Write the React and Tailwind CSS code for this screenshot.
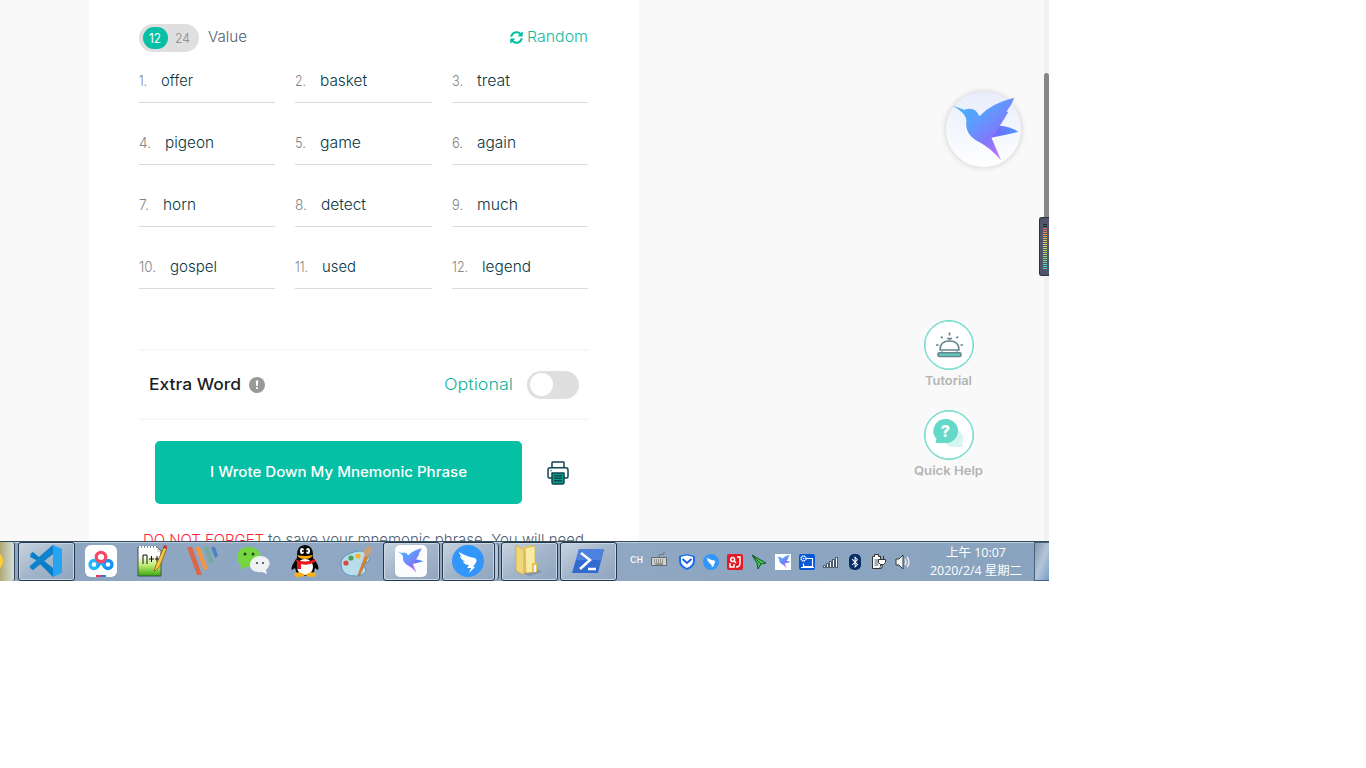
import React from "react";
import { FaSyncAlt, FaBluetoothB } from "react-icons/fa";

const words = ["offer", "basket", "treat", "pigeon", "game", "again", "horn", "detect", "much", "gospel", "used", "legend"];
const numSlots = ["w-[8px]", "w-[11px]", "w-[11px]", "w-[12px]", "w-[11px]", "w-[11px]", "w-[10px]", "w-[12px]", "w-[11px]", "w-[17px]", "w-[13px]", "w-[16px]"];
const numWidths = [8, 11, 11, 12, 11, 11, 10, 12, 11, 17, 13, 16];
const wordWidths = [32, 47, 33, 49, 41, 39, 33, 45, 41, 47, 34, 49];

/* One line of real text set to an exact advance width. */
function Fit({ children, w, size = 15, weight = 300, fill = "#143a42", className = "", font = "Inter, sans-serif" }) {
  return (
    <svg className={"block shrink-0 overflow-visible " + className} width={w} height="20" viewBox={`0 0 ${w} 20`}>
      <text x="0" y="15" textLength={w} lengthAdjust="spacingAndGlyphs" fontFamily={font} fontSize={size} fontWeight={weight} fill={fill}>{children}</text>
    </svg>
  );
}

function Bird({ id, className }) {
  return (
    <svg viewBox="155 77 207 197" className={className}>
      <defs>
        <linearGradient id={id} x1="180" y1="100" x2="315" y2="265" gradientUnits="userSpaceOnUse">
          <stop offset="0" stopColor="#48b2f8" />
          <stop offset=".32" stopColor="#5b9dff" />
          <stop offset=".65" stopColor="#8278fb" />
          <stop offset="1" stopColor="#d070fa" />
        </linearGradient>
        <linearGradient id={id + "t"} x1="357" y1="0" x2="276" y2="0" gradientUnits="userSpaceOnUse">
          <stop offset="0" stopColor="#4d9bff" />
          <stop offset="1" stopColor="#7962fa" />
        </linearGradient>
      </defs>
      <path d="M298 165Q333 168 357 184Q315 194 274 202Z" fill={`url(#${id}t)`} />
      <path d="M160 106L195 118Q227 106 240 137Q278 98 345 82Q337 104 321 124L327 124Q315 148 300 167Q291 188 276 201L305 269Q276 235 246 218Q196 196 201 153Q203 130 160 106Z" fill={`url(#${id})`} />
    </svg>
  );
}

function Swift({ className }) {
  return (
    <svg viewBox="0 0 32 32" className={className}>
      <circle cx="16" cy="16" r="16" fill="#3296fa" />
      <path d="M7 7Q15 12 23 13Q26 15 23 19L21 22H23L17 28L19 23H15L17 20Q12 20 11 16L14 17Q8 14 8 11L12 13Q8 11 7 7Z" fill="#fff" />
    </svg>
  );
}

function Task({ children, w, className = "" }) {
  return (
    <div className={"flex h-[39px] shrink-0 items-center justify-center rounded-[3px] border border-[#25374d] bg-linear-to-br from-[#c8d3df] via-[#a3b5ca] to-[#8fa5bf] pr-[2px] pb-[2px] shadow-[inset_0_0_0_1px_#cbd6e3] " + w + " " + className}>
      {children}
    </div>
  );
}

function Slot({ children }) {
  return <div className="flex h-[39px] w-[51px] shrink-0 items-center justify-center pr-[2px] pb-[2px]">{children}</div>;
}

function Content() {
  return (
    <main className="flex h-[541px] w-[550px] shrink-0 flex-col overflow-hidden bg-white px-[50px] pt-6">
      <div className="flex h-7 shrink-0 items-center">
        <div className="flex h-7 w-[60px] items-center rounded-full bg-[#dfdfdf] pl-1">
          <div className="flex h-[22px] w-[25px] items-center justify-center rounded-full bg-[#05c0a5]"><Fit w={12} size={13} weight={400} fill="#fff" className="mr-px">12</Fit></div>
          <Fit w={15} size={13} weight={300} fill="#888" className="ml-[7px]">24</Fit>
        </div>
        <Fit w={39} fill="#506175" className="mb-[2px] ml-[9px]">Value</Fit>
        <div className="mr-px mb-[2px] ml-auto flex items-center text-[#05c0a5]">
          <FaSyncAlt className="mr-1 size-[13px]" />
          <Fit w={61} fill="#16b79e">Random</Fit>
        </div>
      </div>
      <div className="mt-[9px] grid shrink-0 grid-cols-[136px_137px_136px] gap-5">
        {words.map((word, i) => (
          <div key={word} className="flex h-[42px] items-center border-b border-[#dbdbdb] pb-[1px]">
            <div className={"shrink-0 " + numSlots[i]}><Fit w={numWidths[i]} fill="#858585">{i + 1}.</Fit></div>
            <Fit w={wordWidths[i]} fill="#073642" className="ml-[14px]">{word}</Fit>
          </div>
        ))}
      </div>
      <section className="mt-[60px] flex h-[71px] shrink-0 items-center border-y-2 border-[#f8f8f8] px-[10px]">
        <Fit w={92} size={16} weight={500} fill="#1b1e22">Extra Word</Fit>
        <div className="ml-2 flex size-4 items-center justify-center rounded-full bg-[#999]">
          <svg viewBox="0 0 16 16" className="size-4"><path d="M6.800 3.500h2.500L8.800 9H7.200Z M7 10.200h2V12H7Z" fill="#fff" /></svg>
        </div>
        <Fit w={69} size={16} fill="#12b69c" className="ml-auto">Optional</Fit>
        <div className="ml-[14px] flex h-7 w-[52px] items-center rounded-full bg-[#dfdfdf] pl-[3px]">
          <div className="size-[23px] rounded-full bg-white" />
        </div>
      </section>
      <div className="mt-[21px] flex shrink-0 items-center pl-4">
        <button className="flex h-[63px] w-[367px] items-center justify-center rounded-[5px] bg-[#05c0a5] pb-px">
          <Fit w={257} size={14} weight={500} fill="#fff">I Wrote Down My Mnemonic Phrase</Fit>
        </button>
        <svg viewBox="0 0 22 24" className="ml-[25px] h-6 w-[22px]" fill="none" stroke="#0c4650" strokeWidth="1.500" strokeLinejoin="round">
          <path d="M5 7V1.700q0-.7.7-.7h10.600q.7 0 .7.700V7M5 17H2.500Q1 17 1 15.500V9q0-2.200 2.200-2.200h15.600Q21 6.800 21 9v6.500Q21 17 19.500 17H17" />
          <path d="M5 12h12v9.500q0 1.500-1.500 1.500h-9Q5 23 5 21.500Z" fill="#079e8e" />
          <path d="M7 14.800h8M7 17.300h8M7 19.800h8M3.500 9.500h1" />
        </svg>
      </div>
      <p className="mt-[26px] flex shrink-0 pl-1">
        <Fit w={121} size={15} weight={300} fill="#ff1f3d">DO NOT FORGET</Fit>
        <Fit w={316} size={15} fill="#506175" className="ml-1">to save your mnemonic phrase. You will need</Fit>
      </p>
    </main>
  );
}

function HelpRail() {
  return (
    <aside className="flex w-[70px] flex-col items-center">
      <div className="flex size-[50px] items-center justify-center rounded-full border border-[#64d9c8] bg-white shadow-[inset_0_0_0_.5px_#64d9c8]">
        <svg viewBox="0 0 28 26" className="mr-px mb-px h-[26px] w-7" fill="none" stroke="#668791" strokeWidth="1.600">
          <path d="M5 18q0-9 9.500-9T24 18Z" fill="#fff" />
          <path d="M12 6.500h5M14.500 6v2.500" />
          <path d="M7 18.500v2h15v-2" strokeWidth="1" />
          <rect x="3" y="20.700" width="23" height="3.800" rx="1.200" fill="#5fcbbb" />
          <path d="M14.500.5v3M6 4.500l1.600 1.800M23 4.500l-1.600 1.800M1 13h2.500M25.500 13H28" strokeWidth="1.700" />
        </svg>
      </div>
      <Fit w={47} size={12} weight={600} fill="#b4b4b4" className="mr-px">Tutorial</Fit>
      <div className="mt-[20px] flex size-[50px] items-center justify-center rounded-full border border-[#64d9c8] bg-white shadow-[inset_0_0_0_.5px_#64d9c8]">
        <svg viewBox="0 0 50 50" className="size-[50px] shrink-0">
          <path d="M31 20a8.500 8.500 0 0 1 7 13l1 4H30q-8 0-10-7Z" fill="#d7f5f0" />
          <path d="M22 9a12 12 0 1 1 0 24H11.500l1-4A12 12 0 0 1 22 9Z" fill="#65d9c8" />
          <text x="21.500" y="27" textAnchor="middle" fontSize="16" fontWeight="800" fontFamily="Inter, sans-serif" fill="#fff">?</text>
        </svg>
      </div>
      <Fit w={69} size={12} weight={600} fill="#b4b4b4" className="mr-px">Quick Help</Fit>
    </aside>
  );
}

const meterColors = ["#252a33", "#252a33", "#ee6262", "#f07355", "#f0844c", "#ed944a", "#eaa54b", "#e7b34d", "#e4c34f", "#ddd053", "#d7d957", "#cdd957", "#c6db5b", "#badb61", "#afdc68", "#9fdc6d", "#91df76", "#81df83", "#73dd91", "#65dda0", "#57d9b2", "#4bd6bf", "#43d1ca"];

function Taskbar() {
  return (
    <footer className="flex h-10 w-[1049px] shrink-0 items-center overflow-hidden border-t border-[#334d5d] bg-linear-to-r from-[#8da5c1] via-[#91a9c3] to-[#89a2be] shadow-[inset_0_1px_0_#bdcbd9]">
      <div className="h-[39px] w-[15px] shrink-0 overflow-hidden rounded-r-[3px] border-r border-[#33465b] bg-linear-to-r from-[#b2a873] to-[#d4dfdc]"><div className="mt-[9px] -ml-[17px] size-5 rounded-full bg-[#ffcf32]" /></div>
      <Task w="w-[57px]" className="ml-[3px]">
        <svg viewBox="0 0 32 32" className="size-8"><path d="M23 0L9 12 3 7 0 9l20 20 3 3V23L4 8l-4 3v1l8 4-8 5v2l3 2 20-16Z" fill="#087dc8" /><path d="M0 21l3 4 20-17V0Z" fill="#0f83cf" /><path d="M23 0l9 4v24l-9 4Z" fill="#26a4f2" /></svg>
      </Task>
      <div className="flex shrink-0 pl-px">
        <Slot>
          <svg viewBox="0 0 32 32" className="size-8"><rect width="32" height="32" rx="6" fill="#fff" /><g fill="none" strokeWidth="3.300"><circle cx="9" cy="19.500" r="4" stroke="#22b7fb" /><circle cx="23" cy="19.500" r="4" stroke="#1792f5" /><path d="M12 22l4-5 4 5" stroke="#22a6fa" /><circle cx="16" cy="12" r="4.700" stroke="#fb4866" /></g><path d="M11 30h5v2h-5Z" fill="#ef345b" /><path d="M16 30h5v2h-5Z" fill="#207be4" /></svg>
        </Slot>
        <Slot>
          <svg viewBox="0 0 30 34" className="h-[34px] w-[30px]"><defs><linearGradient id="note" x2="0" y2="1"><stop offset=".3" stopColor="#fff" /><stop offset=".65" stopColor="#bce86a" /><stop offset="1" stopColor="#34a80e" /></linearGradient></defs><path d="M1 3h19l4 4v25H1Z" fill="url(#note)" stroke="#425151" /><path d="M2 3h18" stroke="#fff" strokeWidth="2" strokeDasharray="2 1" /><path d="M20 3v5h4" fill="#ddd" /><path d="M6 20v-9h4v9M12 15h5M14.500 12v6M18 15h4M20 12v6" fill="none" stroke="#111" /><path d="M17 27l2-6L27 3l3 1-7 18-5 5Z" fill="#f7c53d" stroke="#76521b" strokeWidth=".7" /><path d="M26 4l1-3 3 1v3Z" fill="#b73a43" /></svg>
        </Slot>
        <Slot>
          <svg viewBox="0 0 32 32" className="size-8"><path d="M0 2h5l10 28h-5Z" fill="#dc664a" /><path d="M8 2h5l8 22-4 1Z" fill="#f09746" /><path d="M16 2h5l6 15-4 2Z" fill="#75aaa3" /><path d="M24 2h4l3 9-3 2Z" fill="#4b84bd" /></svg>
        </Slot>
        <Slot>
          <svg viewBox="0 0 34 28" className="h-7 w-[34px]"><path d="M11.500 0C4 0 0 5 0 10q0 5 4 8l-1 4 5-2q14 2 16-10Q22 0 11.500 0Z" fill="#75d640" /><path d="M23 9c-6 0-10 4-10 9s5 8 12 7l5 2-1-4c7-6 3-14-6-14Z" fill="#eef2f3" /><g fill="#284227"><circle cx="8" cy="7" r="1.500" /><circle cx="16" cy="7" r="1.500" /><circle cx="20" cy="16" r="1" /><circle cx="26" cy="16" r="1" /></g></svg>
        </Slot>
        <Slot>
          <svg viewBox="0 0 28 32" className="h-8 w-7"><path d="M6 13Q5 0 14 0t8 13q7 8 5 12l-3-2q-1 8-10 8T4 23l-3 2q-2-3 5-12Z" fill="#070808" /><ellipse cx="14" cy="22" rx="8" ry="8" fill="#fff" /><ellipse cx="11" cy="6" rx="2" ry="3" fill="#fff" /><ellipse cx="17" cy="6" rx="2" ry="3" fill="#fff" /><circle cx="12" cy="6" r="1" /><circle cx="16" cy="6" r="1" /><path d="M6 10q8 2 16 0-2 4-8 4t-8-4Z" fill="#ffa900" /><path d="M4 14q10 5 20 0v3q-7 4-14 2v5H6v-7Z" fill="#e8171c" /><path d="M3 29q5-4 11 1-2 2-9 2ZM14 30q7-5 11-1 1 3-6 3Z" fill="#ffb011" /></svg>
        </Slot>
        <Slot>
          <svg viewBox="0 0 32 32" className="size-8"><path d="M1 20Q0 12 11 8q12-5 17 2 3 4 0 7l-5 1q-3 2 3 6 0 6-9 7Q2 32 1 20Z" fill="#b9ddeb" stroke="#5996b7" /><circle cx="6" cy="18" r="2.600" fill="#d94a42" /><circle cx="11" cy="13" r="2.600" fill="#45a34f" /><circle cx="18" cy="11" r="2.600" fill="#f4b52e" /><path d="M18 30l7-19 3 1-8 18Z" fill="#e3822c" stroke="#a36232" strokeWidth=".5" /><path d="M25 11l-2-6 9-5v6l-4 6Z" fill="#c9a078" /></svg>
        </Slot>
      </div>
      <Task w="w-[57px]" className="ml-[1px]"><div className="flex size-8 items-center justify-center rounded-[5px] bg-[#fcfcff]"><Bird id="taskBird" className="size-[27px]" /></div></Task>
      <Task w="w-[53px]" className="ml-[2px]"><Swift className="size-8" /></Task>
      <div className="h-[37px] w-[4px] shrink-0 rounded-r border-r border-[#32475e] bg-[#b7c5d4]" />
      <Task w="w-[57px]" className="ml-[2px]">
        <svg viewBox="0 0 32 34" className="h-[34px] w-8"><path d="M10 30l14-5 5 3-12 4Z" fill="#60718166" /><path d="M8 4l10-3v26l-9 2Z" fill="#e7cc68" /><path d="M12 4l10-2v26l-9 1Z" fill="#f9eba4" stroke="#d5ae47" strokeWidth=".7" /><path d="M3 1l8 5v25l-8-4Z" fill="#f0d779" stroke="#caa14b" strokeWidth=".7" /><path d="M19 19h5v9h-5Z" fill="#e4c357" /><path d="M22 21v7" stroke="#edfaff" strokeWidth="2" /></svg>
      </Task>
      <Task w="w-[57px]" className="ml-[2px]">
        <svg viewBox="0 0 32 26" className="h-[26px] w-8"><path d="M7 1h25l-6 24H0Z" fill="#326bd0" /><path d="M7 1h25l-3 11H4Z" fill="#4c81df" /><path d="M9 5l9 7-10 9M16 21h8" fill="none" stroke="#fff" strokeWidth="2.500" /></svg>
      </Task>
      <div className="flex h-full w-[300px] shrink-0 items-center pl-[13px]">
        <span className="-mt-[4px] w-[17px] font-['Liberation_Mono',monospace] text-[11px] leading-3 text-white">CH</span>
        <svg viewBox="0 0 16 16" className="ml-[4px] -mt-1 size-4"><path d="M8 5V3l5-1V0" fill="none" stroke="#70757a" /><path d="M.500 5.500h15v8H.5Z" fill="#d2d2cc" stroke="#666b70" /><path d="M3 8h10M3 10h10" stroke="#555" strokeDasharray="1 1" /><path d="M4 12h8" stroke="#555" /></svg>
        <div className="ml-3 flex items-center gap-2 [&>svg]:size-4 [&>svg]:shrink-0">
          <svg viewBox="0 0 16 16"><path d="M8 0l8 2v5q0 6-8 9Q0 13 0 7V2Z" fill="#176eea" /><path d="M2 3q6-3 12 0v4q0 4-6 7-6-3-6-7Z" fill="#fff" /><path d="M3.500 5l4.500 4 4.500-4" fill="none" stroke="#1865d8" strokeWidth="2" /></svg>
          <Swift />
          <svg viewBox="0 0 16 16"><rect width="16" height="16" rx="2" fill="#e31924" /><path d="M7 7a2 2 0 1 1 .1-.1L9 9M10 3h3v6q0 4-4 4M3 9v4h4V10" fill="none" stroke="#fff" strokeWidth="1.500" /></svg>
          <svg viewBox="0 0 16 16"><path d="M1 1l14 8-5 1-3 5-1-6Z" fill="#42c454" stroke="#125a28" /><path d="M2 2l8 8" fill="none" stroke="#125a28" /></svg>
          <div className="flex size-4 items-center justify-center bg-white"><Bird id="trayBird" className="size-[15px]" /></div>
          <svg viewBox="0 0 16 16"><rect width="16" height="16" rx="2" fill="#0757d7" /><path d="M7.500 4.500h6v8h-9v-3M2 13.500h13" fill="none" stroke="#fff" strokeWidth="1.200" /><circle cx="4.500" cy="4.500" r="2.500" fill="#0757d7" stroke="#fff" strokeWidth="1.300" strokeDasharray="1.500 .5" /><circle cx="4.500" cy="4.500" r=".8" fill="#fff" /></svg>
          <svg viewBox="0 0 16 16" fill="#fff" stroke="#28384c" strokeWidth=".8"><path d="M.5 11.500h2v2h-2ZM3.500 9.500h2v4h-2ZM6.500 7.500h2v6h-2ZM9.500 5.500h2v8h-2ZM12.500 3.500h2v10h-2Z" /></svg>
          <div className="flex h-4 w-4 items-center justify-center"><div className="flex h-4 w-[12px] items-center justify-center rounded-[5px] bg-[#072f66] text-white"><FaBluetoothB className="size-[12px]" /></div></div>
          <svg viewBox="0 0 16 16"><path d="M1.500 2.500h2v-2h4v2h2v12h-8Z" fill="#fff" stroke="#333" /><path d="M3.500 5h4v7h-4Z" fill="#9baebd" /><path d="M9.500 2v3M12.500 2v3M7.500 5.500h7v3l-2 2h-3l-2-2ZM11 11v3H8" fill="#fff" stroke="#333" /></svg>
          <svg viewBox="0 0 16 16" fill="none" stroke="#303841"><path d="M1 5h3l4-4v14l-4-4H1Z" fill="#f4f4f4" /><path d="M10 5q2 3 0 6M12 3q4 5 0 10" stroke="#f4f4f4" strokeWidth="1.300" /></svg>
        </div>
      </div>
      <div className="-mt-[2px] flex h-[36px] w-[117px] shrink-0 flex-col items-center justify-center text-white">
        <Fit w={60} size={12} weight={400} fill="#fff" className="-mb-[2px] ml-[1px]" font="'Open Sans', 'Noto Sans CJK SC', sans-serif">上午 10:07</Fit>
        <Fit w={92} size={12} weight={400} fill="#fff" font="'Open Sans', 'Noto Sans CJK SC', sans-serif">2020/2/4 星期二</Fit>
      </div>
      <div className="h-[39px] w-[15px] shrink-0 border border-r-0 border-[#47617e] bg-linear-to-br from-[#8397ad] via-[#b5c5d7] to-[#759fc9]" />
    </footer>
  );
}

export default function App() {
  return (
    <div className="h-screen w-full overflow-hidden bg-white">
      <div className="flex h-[581px] w-[1049px] flex-col overflow-hidden">
        <div className="relative flex h-[541px] shrink-0 overflow-hidden bg-[#f9f9f9] pl-[89px]">
          <Content />
          <div className="flex flex-1 justify-end pt-[320px] pr-[60px]"><HelpRail /></div>
          <div className="h-full w-[5px] bg-[#f1f1f1] pt-[73px]"><div className="h-[160px] rounded-t-sm bg-[#888]" /></div>
          <div className="absolute top-[92px] left-[946px] flex size-[75px] items-center justify-center rounded-full bg-linear-to-b from-[#e7edfc] to-white shadow-[0_0_6px_#0003]">
            <Bird id="floatBird" className="mb-[2px] ml-[4px] h-[66px] w-[69px] shrink-0" />
          </div>
          <div className="absolute top-[217px] left-[1039px] h-[59px] w-[10px] rounded-l-[3px] border border-r-0 border-[#30323c] bg-[#52566a] pt-[6px] pl-[3px]">
            {meterColors.map((color, i) => <div key={i} className="mb-px h-px w-1" style={{ backgroundColor: color }} />)}
          </div>
        </div>
        <Taskbar />
      </div>
    </div>
  );
}
